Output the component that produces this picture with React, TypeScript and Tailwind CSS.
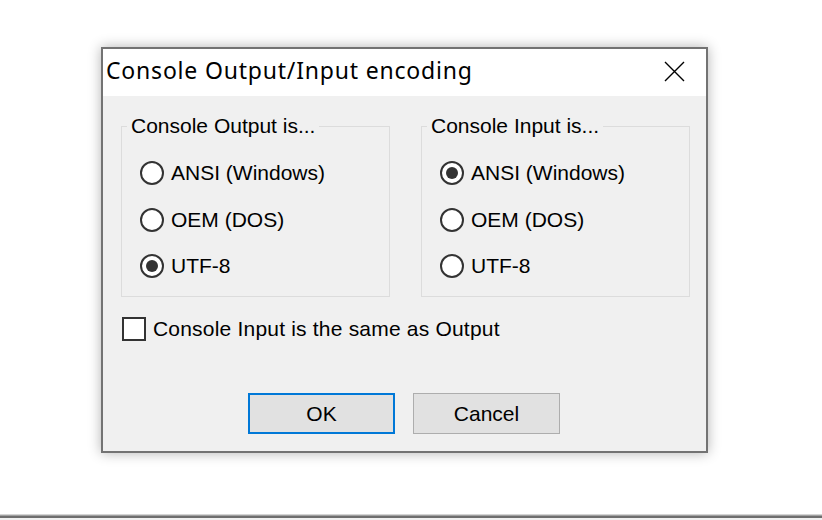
import { useState } from 'react'

type Enc = 'ansi' | 'oem' | 'utf8'

const options: { value: Enc; label: string }[] = [
  { value: 'ansi', label: 'ANSI (Windows)' },
  { value: 'oem', label: 'OEM (DOS)' },
  { value: 'utf8', label: 'UTF-8' },
]

const Radio = ({ checked, label, onClick }: { checked: boolean; label: string; onClick: () => void }) => (
  <div className="flex items-center h-[24px] cursor-default" onClick={onClick}>
    <span className="w-[24px] h-[24px] rounded-full border-2 border-[#333333] bg-white flex items-center justify-center shrink-0">
      {checked && <span className="w-[12px] h-[12px] rounded-full bg-[#333333]" />}
    </span>
    <span className="ml-[7px]">{label}</span>
  </div>
)

const Group = ({ title, value, onChange }: { title: string; value: Enc; onChange: (v: Enc) => void }) => (
  <fieldset className="w-[269px] h-[183px] border border-[#dcdcdc] px-0 m-0">
    <legend className="ml-[5px] px-[4px] h-[24px] leading-[24px]">{title}</legend>
    <div className="flex flex-col gap-[22.5px] pt-[23px] pl-[18px]">
      {options.map((o) => (
        <Radio key={o.value} checked={value === o.value} label={o.label} onClick={() => onChange(o.value)} />
      ))}
    </div>
  </fieldset>
)

export default function App() {
  const [output, setOutput] = useState<Enc>('utf8')
  const [input, setInput] = useState<Enc>('ansi')
  const [same, setSame] = useState(false)

  return (
    <div className="h-[520px] w-full bg-white flex flex-col overflow-hidden">
      <div className="flex-1 pl-[101px] pt-[47px]">
        <div className="w-[607px] h-[406px] border-2 border-[#737373] bg-[#f0f0f0] shadow-[0_0_12px_rgba(0,0,0,0.3)] flex flex-col text-black">
          <div className="h-[47px] bg-white flex items-center justify-between pl-[3px] pr-[21px] pb-[4px] shrink-0">
            <span className="text-[23px] tracking-[0.8px] font-['Noto_Sans',sans-serif]">Console Output/Input encoding</span>
            <svg width="21" height="21" viewBox="0 0 21 21" className="mt-[1px]">
              <path d="M1 1 L20 20 M20 1 L1 20" stroke="#000" strokeWidth="1.4" fill="none" />
            </svg>
          </div>
          <div className="flex-1 pt-[18px] pl-[18px] text-[21px] font-['Liberation_Sans',Arial,sans-serif]">
            <div className="flex gap-[31px]">
              <Group title="Console Output is..." value={output} onChange={setOutput} />
              <Group title="Console Input is..." value={input} onChange={setInput} />
            </div>
            <div className="flex items-center mt-[20px] ml-px h-[24px]" onClick={() => setSame(!same)}>
              <span className="w-[24px] h-[24px] border-2 border-[#333333] bg-white flex items-center justify-center">
                {same && (
                  <svg width="16" height="16" viewBox="0 0 16 16">
                    <path d="M2 8 L6 12 L14 3" stroke="#333" strokeWidth="2" fill="none" />
                  </svg>
                )}
              </span>
              <span className="ml-[7px] tracking-[0.2px]">Console Input is the same as Output</span>
            </div>
            <div className="flex gap-[18px] mt-[52px] ml-[127px]">
              <button className="w-[147px] h-[41px] bg-[#e1e1e1] border-2 border-[#0078d7]">OK</button>
              <button className="w-[147px] h-[41px] bg-[#e1e1e1] border border-[#adadad]">Cancel</button>
            </div>
          </div>
        </div>
      </div>
      <div className="h-px bg-[#d4d4d4]" />
      <div className="h-px bg-[#a0a0a0]" />
      <div className="h-[2px] bg-[#6e6e6e]" />
      <div className="h-[2px] bg-[#f0f0f0]" />
    </div>
  )
}
